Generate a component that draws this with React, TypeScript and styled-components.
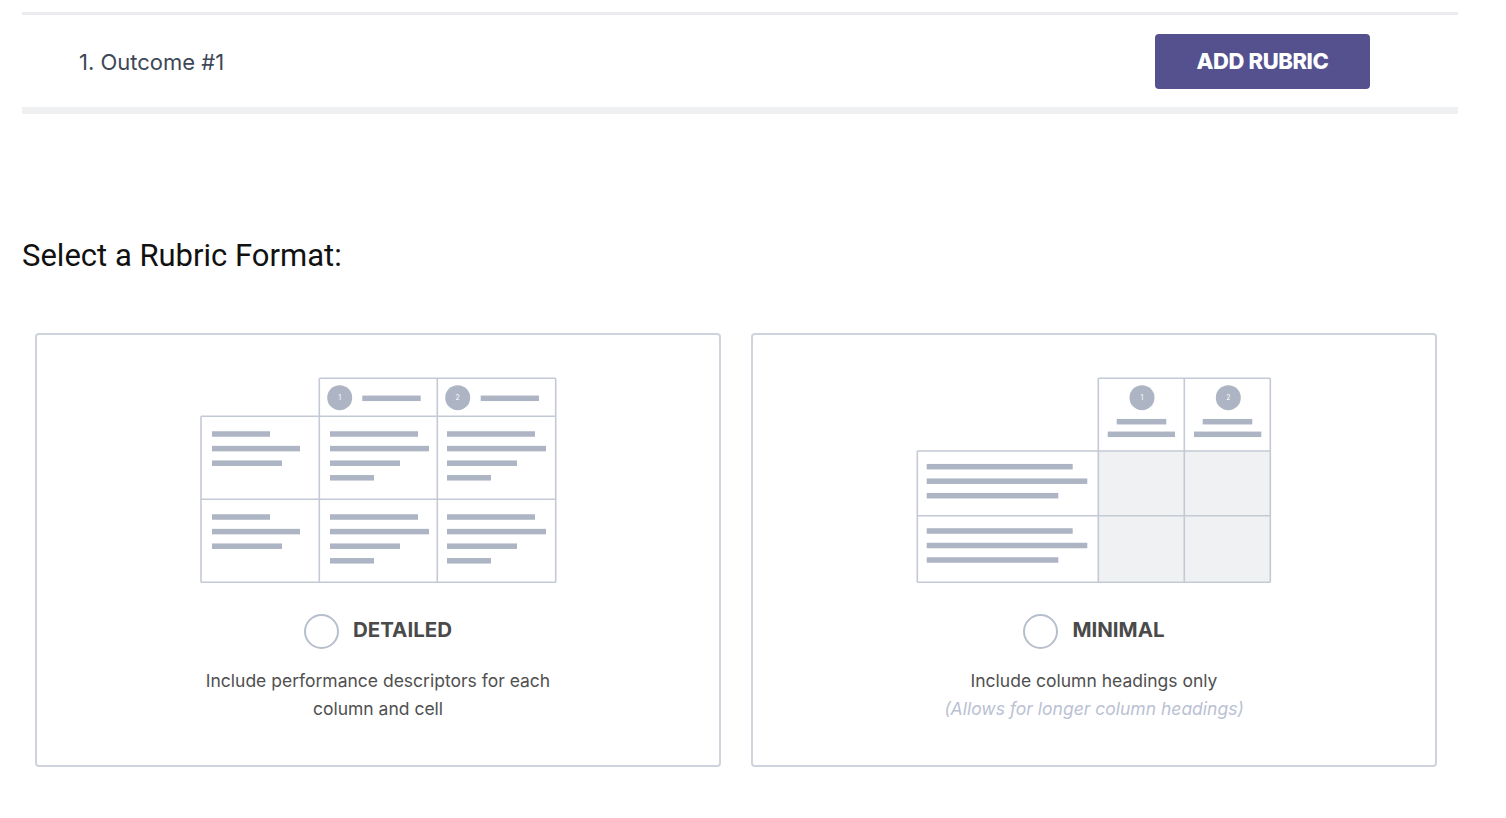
import styled, { createGlobalStyle } from "styled-components"

const GlobalStyle = createGlobalStyle`
    body {
        margin: 0;
        background: #fff;
        font-family: Inter, "Liberation Sans", sans-serif;
    }
`

const LINE = "#c3c9d5"
const BAR = "#adb5c4"

function Bar({ x, y, w }: { x: number; y: number; w: number }) {
    return <rect x={x} y={y - 2.75} width={w} height={5.5} fill={BAR} />
}

function Badge({ cx, cy, n }: { cx: number; cy: number; n: number }) {
    return (
        <g>
            <circle cx={cx} cy={cy} r={12.5} fill={BAR} />
            <text x={cx} y={cy + 2.5} textAnchor="middle" fontSize="7" fontFamily="Inter, sans-serif" fill="#fff">{n}</text>
        </g>
    )
}

function DetailedSketch() {
    const cols = [12, 130, 247]
    const rows = [57, 140]
    const wide = [88, 99, 70, 44]
    const narrow = [58, 88, 70]
    return (
        <Sketch width="357" height="207" viewBox="0 0 357 207">
            <g stroke={LINE} strokeWidth="1.6" fill="none">
                <line x1="119.3" y1="1.3" x2="355.7" y2="1.3" />
                <line x1="1" y1="39.3" x2="355.7" y2="39.3" />
                <line x1="1" y1="122.3" x2="355.7" y2="122.3" />
                <line x1="1" y1="205.3" x2="355.7" y2="205.3" />
                <line x1="1" y1="39.3" x2="1" y2="205.3" />
                <line x1="119.3" y1="1.3" x2="119.3" y2="205.3" />
                <line x1="237.3" y1="1.3" x2="237.3" y2="205.3" />
                <line x1="355.7" y1="1.3" x2="355.7" y2="205.3" />
            </g>
            <Badge cx={139.7} cy={20.7} n={1} />
            <Bar x={162.3} y={21.3} w={58.4} />
            <Badge cx={257.7} cy={20.7} n={2} />
            <Bar x={280.7} y={21.3} w={58.3} />
            {rows.map((top) => (
                <g key={top}>
                    {narrow.map((w, i) => (
                        <Bar key={"a" + i} x={cols[0]} y={top + i * 14.6} w={w} />
                    ))}
                    {wide.map((w, i) => (
                        <Bar key={"b" + i} x={cols[1]} y={top + i * 14.6} w={w} />
                    ))}
                    {wide.map((w, i) => (
                        <Bar key={"c" + i} x={cols[2]} y={top + i * 14.6} w={w} />
                    ))}
                </g>
            ))}
        </Sketch>
    )
}

function MinimalSketch() {
    const rows = [89.7, 154]
    const widths = [146, 160.6, 131.6]
    return (
        <Sketch width="356" height="207" viewBox="0 0 356 207">
            <rect x="182.3" y="74" width="172" height="131.3" fill="#f0f1f3" />
            <g stroke={LINE} strokeWidth="1.6" fill="none">
                <line x1="182.3" y1="1.3" x2="354.3" y2="1.3" />
                <line x1="1.3" y1="74" x2="354.3" y2="74" />
                <line x1="1.3" y1="138.7" x2="354.3" y2="138.7" />
                <line x1="1.3" y1="205.3" x2="354.3" y2="205.3" />
                <line x1="1.3" y1="74" x2="1.3" y2="205.3" />
                <line x1="182.3" y1="1.3" x2="182.3" y2="205.3" />
                <line x1="268.3" y1="1.3" x2="268.3" y2="205.3" />
                <line x1="354.3" y1="1.3" x2="354.3" y2="205.3" />
            </g>
            <Badge cx={226} cy={20.7} n={1} />
            <Bar x={200.7} y={44.7} w={49.6} />
            <Bar x={191.7} y={57.3} w={67.3} />
            <Badge cx={312.3} cy={20.7} n={2} />
            <Bar x={286.7} y={44.7} w={49.6} />
            <Bar x={278} y={57.3} w={67.3} />
            {rows.map((top) => (
                <g key={top}>
                    {widths.map((w, i) => (
                        <Bar key={i} x={10.7} y={top + i * 14.5} w={w} />
                    ))}
                </g>
            ))}
        </Sketch>
    )
}

export default function App() {
    return (
        <Wrapper>
            <GlobalStyle />
            <OutcomeRow>
                <OutcomeName>1. Outcome #1</OutcomeName>
                <AddButton>ADD RUBRIC</AddButton>
            </OutcomeRow>

            <Heading>Select a Rubric Format:</Heading>

            <Formats>
                <FormatCard>
                    <DetailedSketch />
                    <Choice>
                        <Radio />
                        <ChoiceLabel>DETAILED</ChoiceLabel>
                    </Choice>
                    <Description>Include performance descriptors for each column and cell</Description>
                </FormatCard>

                <FormatCard>
                    <MinimalSketch />
                    <Choice>
                        <Radio />
                        <ChoiceLabel>MINIMAL</ChoiceLabel>
                    </Choice>
                    <Description>
                        Include column headings only
                        <Note>(Allows for longer column headings)</Note>
                    </Description>
                </FormatCard>
            </Formats>
        </Wrapper>
    )
}

const Wrapper = styled.div`
    width: 1436px;
    padding: 12px 0 0 22px;
`

const OutcomeRow = styled.div`
    height: 92px;
    display: flex;
    align-items: center;
    justify-content: space-between;
    padding: 0 88px 0 57px;
    border-top: 3px solid #ebecef;
    border-bottom: 7px solid #eef0f2;
`

const OutcomeName = styled.span`
    font-size: 22px;
    color: #3e4756;
    padding-top: 2px;
`

const AddButton = styled.button`
    width: 215px;
    height: 55px;
    border: none;
    border-radius: 4px;
    background: #55518f;
    color: #fff;
    font-family: Inter, "Liberation Sans", sans-serif;
    font-size: 22px;
    font-weight: 800;
    letter-spacing: -0.4px;
    cursor: pointer;
`

const Heading = styled.h2`
    margin: 124px 0 60px;
    font-family: Roboto, "Liberation Sans", sans-serif;
    font-size: 31px;
    line-height: 35px;
    font-weight: 400;
    color: #111;
`

const Formats = styled.div`
    display: grid;
    grid-template-columns: 686px 686px;
    gap: 30px;
    padding-left: 13px;
`

const FormatCard = styled.div`
    box-sizing: border-box;
    height: 434px;
    padding-top: 42px;
    border: 2px solid #cfd3dd;
    border-radius: 4px;
    display: flex;
    flex-direction: column;
    align-items: center;
`

const Sketch = styled.svg`
    display: block;
`

const Choice = styled.label`
    margin-top: 30px;
    display: flex;
    align-items: center;
    gap: 14px;
    cursor: pointer;
`

const Radio = styled.span`
    box-sizing: border-box;
    width: 35px;
    height: 35px;
    border-radius: 50%;
    border: 2.5px solid #b7bfcd;
`

const ChoiceLabel = styled.span`
    font-size: 20.5px;
    font-weight: 700;
    color: #4a4a4a;
    padding-bottom: 4px;
`

const Description = styled.p`
    margin: 18px 0 0;
    width: 380px;
    text-align: center;
    font-size: 17.5px;
    line-height: 28px;
    color: #505050;
`

const Note = styled.span`
    display: block;
    font-style: italic;
    color: #bac1d3;
`
